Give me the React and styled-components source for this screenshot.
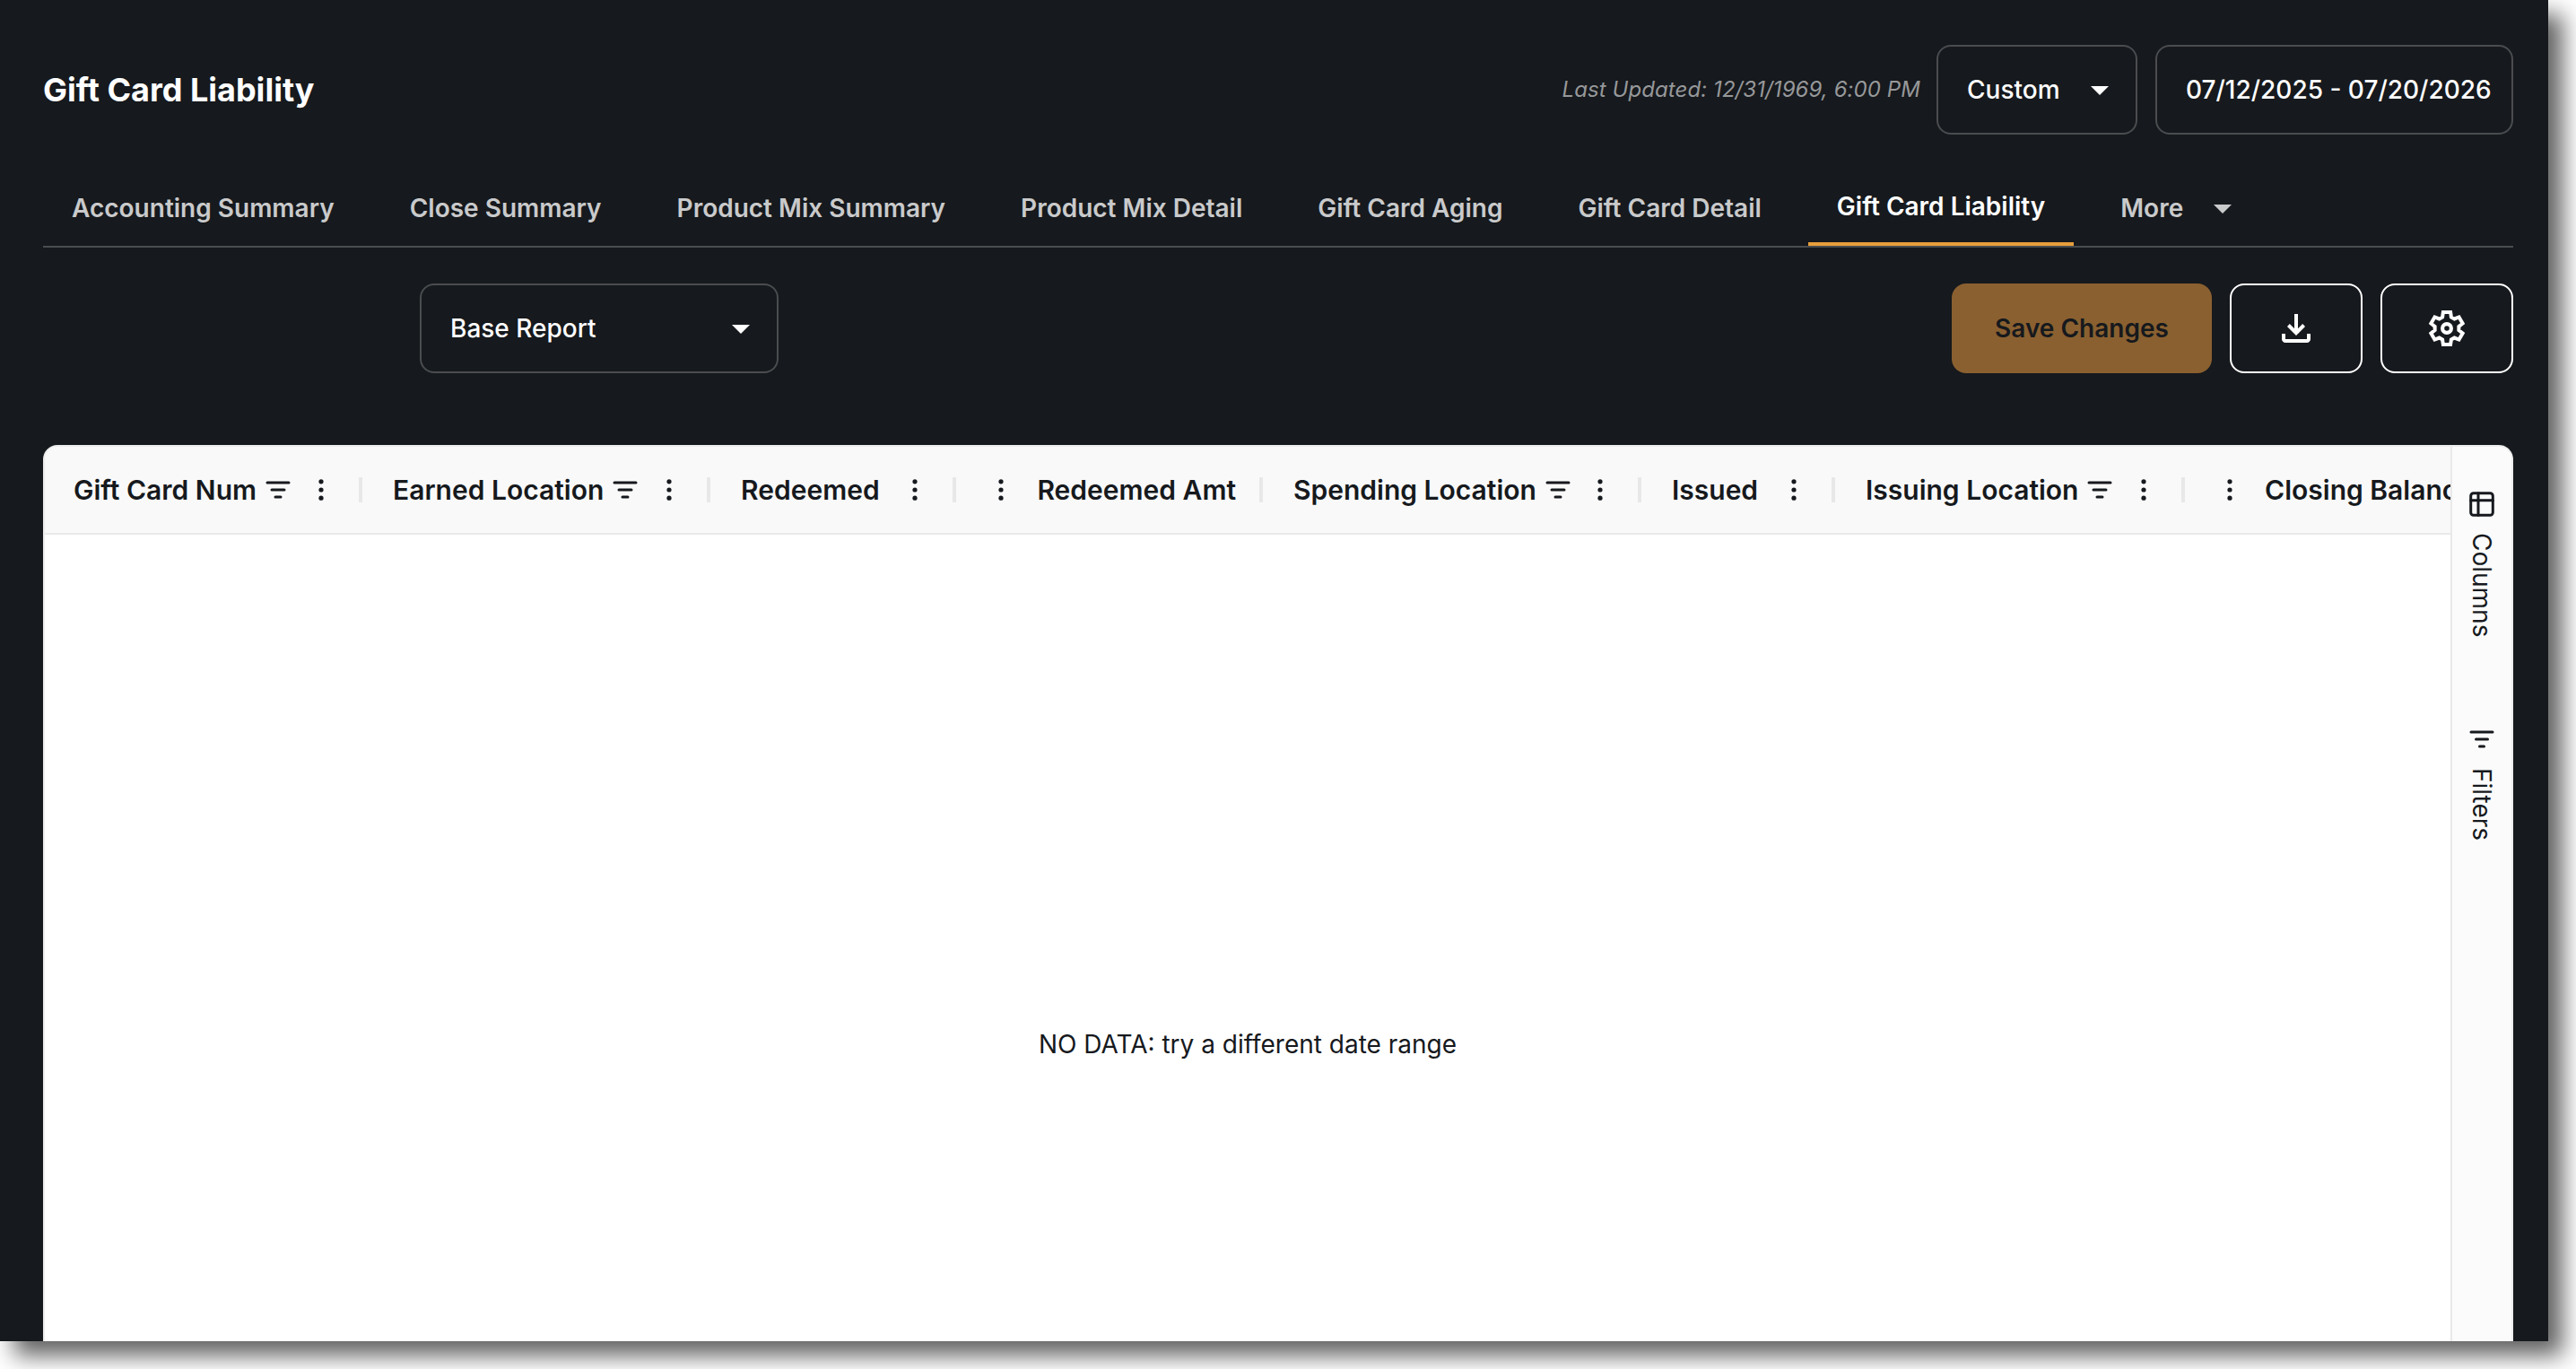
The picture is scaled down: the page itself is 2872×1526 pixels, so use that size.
import React, { Component } from "react";
import styled, { createGlobalStyle, css } from "styled-components";

const tabs = [
  "Accounting Summary",
  "Close Summary",
  "Product Mix Summary",
  "Product Mix Detail",
  "Gift Card Aging",
  "Gift Card Detail",
  "Gift Card Liability"
];

const columns = [
  { name: "Gift Card Num", width: 354, filter: true },
  { name: "Earned Location", width: 388, filter: true },
  { name: "Redeemed", width: 274 },
  { name: "Redeemed Amt", width: 342, numeric: true },
  { name: "Spending Location", width: 422, filter: true },
  { name: "Issued", width: 216 },
  { name: "Issuing Location", width: 390, filter: true },
  { name: "Closing Balance", width: 352, numeric: true }
];

const GlobalStyle = createGlobalStyle`
  html,
  body {
    margin: 0;
    background: #fff;
    overflow: hidden;
  }
  * {
    box-sizing: border-box;
  }
`;

const Window = styled.div`
  display: flex;
  flex-direction: column;
  width: 2841px;
  height: 1495px;
  margin: 0 31px 31px 0;
  padding: 50px 39px 0 48px;
  background: #16191d;
  color: #fff;
  font-family: Inter, "Liberation Sans", sans-serif;
  font-size: 28px;
  line-height: 40px;
  white-space: nowrap;
  box-shadow: 16px 16px 24px rgba(0, 0, 0, 0.62);
`;

const Header = styled.header`
  display: flex;
  align-items: center;
  height: 100px;
`;
const Title = styled.h1`
  flex: 1;
  margin: 0;
  font-size: 36px;
  font-weight: 700;
`;
const Updated = styled.div`
  margin-right: 18px;
  color: #96989a;
  font-size: 24px;
  font-style: italic;
  letter-spacing: 0.08px;
`;
const Select = styled.div`
  display: flex;
  align-items: center;
  justify-content: space-between;
  width: ${props => props.$width}px;
  height: 100px;
  padding: 0 30px 0 32px;
  border: 2px solid #4a4c4f;
  border-radius: 16px;
  font-weight: 500;
`;
const DateRange = styled(Select)`
  margin-left: 20px;
`;
const Caret = styled.span`
  border: 10px solid transparent;
  border-top-color: currentColor;
  border-bottom: 0;
  margin-top: 2px;
`;

const Tabs = styled.nav`
  display: flex;
  gap: 20px;
  height: 86px;
  margin-top: 40px;
  border-bottom: 2px solid #4a4c4f;
`;
const Tab = styled.div`
  display: flex;
  align-items: center;
  height: 84px;
  padding: 0 32px;
  color: #c9cacb;
  font-weight: 600;
  ${props =>
    props.$active &&
    css`
      color: #fff;
      border-bottom: 4px solid #e79f3b;
    `}
  ${Caret} {
    margin-left: 34px;
  }
`;

const Toolbar = styled.div`
  display: flex;
  gap: 20px;
  height: 100px;
  margin: 40px 0 80px;
  padding-left: 420px;
`;
const Spacer = styled.div`
  flex: 1;
`;
const Button = styled.button`
  display: flex;
  align-items: center;
  justify-content: center;
  width: 148px;
  padding: 0;
  border: 2px solid #fff;
  border-radius: 16px;
  background: transparent;
  color: #fff;
  font: inherit;
`;
const SaveButton = styled(Button)`
  width: 290px;
  border: 0;
  background: #8a6030;
  color: #16191d;
  font-weight: 600;
`;

const Grid = styled.div`
  display: flex;
  flex: 1;
  min-height: 0;
  border: 2px solid #ededed;
  border-bottom: 0;
  border-radius: 16px 16px 0 0;
  background: #fff;
  color: #16191d;
  overflow: hidden;
`;
const GridMain = styled.div`
  display: flex;
  flex-direction: column;
  width: 2682px;
  overflow: hidden;
`;
const GridHeader = styled.div`
  display: flex;
  flex: none;
  height: 98px;
  background: #f9f9f9;
  border-bottom: 2px solid #e9e9e9;
`;
const HeaderCell = styled.div`
  display: flex;
  flex: none;
  align-items: center;
  justify-content: space-between;
  width: ${props => props.$width}px;
  padding: ${props => (props.$numeric ? "0 26px 0 47px" : "0 39px 0 34px")};
  border-right: 4px solid;
  border-image: linear-gradient(
      transparent 34px,
      #e8e8e8 34px,
      #e8e8e8 62px,
      transparent 62px
    )
    1;
  border-image-width: 0 4px 0 0;
  font-size: 30px;
  font-weight: 600;
  &:first-child {
    padding-left: 32px;
  }
`;
const Label = styled.div`
  display: flex;
  align-items: center;
  gap: 10px;
`;
const Empty = styled.div`
  padding-top: 548px;
  text-align: center;
`;

const SideBar = styled.aside`
  flex: 1;
  background: #fbfbfb;
  border-left: 2px solid #e9e9e9;
`;
const SideTab = styled.div`
  display: flex;
  flex-direction: column;
  align-items: center;
  gap: ${props => props.$gap}px;
  height: 262px;
  padding-top: ${props => props.$top}px;
`;
const SideLabel = styled.span`
  writing-mode: vertical-rl;
`;

const Stroke = styled.svg`
  display: block;
  fill: none;
  stroke: currentColor;
  stroke-width: 3px;
  stroke-linecap: round;
  stroke-linejoin: round;
`;

const FilterIcon = () => (
  <Stroke width="28" height="20" viewBox="0 0 28 20">
    <path d="M2 2h24M7 10h14M11 18h6" />
  </Stroke>
);

const DotsIcon = () => (
  <svg width="6" height="24" viewBox="0 0 6 24" fill="currentColor">
    <circle cx="3" cy="2.8" r="2.6" />
    <circle cx="3" cy="12" r="2.6" />
    <circle cx="3" cy="21.2" r="2.6" />
  </svg>
);

const ColumnsIcon = () => (
  <Stroke width="28" height="28" viewBox="0 0 28 28">
    <rect x="1.7" y="1.7" width="24.6" height="24.6" rx="3" />
    <path d="M1.7 9.7h24.6M10 1.7v24.6" />
  </Stroke>
);

const SideFilterIcon = () => (
  <Stroke width="28" height="26" viewBox="0 0 28 26">
    <path d="M2 2h24M7.5 10h13M11.5 18h5" />
  </Stroke>
);

const DownloadIcon = () => (
  <svg width="48" height="48" viewBox="0 0 24 24" fill="currentColor">
    <path d="m12 16-5-5 1.4-1.45 2.6 2.6V4h2v8.15l2.6-2.6L17 11l-5 5Zm-6 4q-.825 0-1.412-.587T4 18v-3h2v3h12v-3h2v3q0 .825-.587 1.413T18 20H6Z" />
  </svg>
);

// one tooth, repeated every 60 degrees around the hub
const tooth = [[-2.45, -6.3], [-2.05, -9], [2.05, -9], [2.45, -6.3]];
const gear = [0, 1, 2, 3, 4, 5]
  .map(i => {
    const a = (i * Math.PI) / 3;
    return tooth
      .map(([x, y]) =>
        [
          x * Math.cos(a) - y * Math.sin(a),
          x * Math.sin(a) + y * Math.cos(a)
        ].join(",")
      )
      .join(" ");
  })
  .join(" ");

const GearIcon = () => (
  <svg
    width="48"
    height="48"
    viewBox="-12 -12 24 24"
    fill="none"
    stroke="currentColor"
    strokeWidth="2"
  >
    <polygon points={gear} />
    <circle r="2.45" strokeWidth="2.1" />
  </svg>
);

export default class App extends Component {
  render() {
    return (
      <>
        <GlobalStyle />
        <Window>
          <Header>
            <Title>Gift Card Liability</Title>
            <Updated>Last Updated: 12/31/1969, 6:00 PM</Updated>
            <Select $width={224}>
              Custom
              <Caret />
            </Select>
            <DateRange $width={399}>07/12/2025 - 07/20/2026</DateRange>
          </Header>
          <Tabs>
            {tabs.map(tab => (
              <Tab key={tab} $active={tab === "Gift Card Liability"}>
                {tab}
              </Tab>
            ))}
            <Tab>
              More
              <Caret />
            </Tab>
          </Tabs>
          <Toolbar>
            <Select $width={400}>
              Base Report
              <Caret />
            </Select>
            <Spacer />
            <SaveButton>Save Changes</SaveButton>
            <Button>
              <DownloadIcon />
            </Button>
            <Button>
              <GearIcon />
            </Button>
          </Toolbar>
          <Grid>
            <GridMain>
              <GridHeader>
                {columns.map(({ name, width, filter, numeric }) => (
                  <HeaderCell key={name} $width={width} $numeric={numeric}>
                    {numeric && <DotsIcon />}
                    <Label>
                      {name}
                      {filter && <FilterIcon />}
                    </Label>
                    {!numeric && <DotsIcon />}
                  </HeaderCell>
                ))}
              </GridHeader>
              <Empty>NO DATA: try a different date range</Empty>
            </GridMain>
            <SideBar>
              <SideTab $top={50} $gap={18}>
                <ColumnsIcon />
                <SideLabel>Columns</SideLabel>
              </SideTab>
              <SideTab $top={54} $gap={16}>
                <SideFilterIcon />
                <SideLabel>Filters</SideLabel>
              </SideTab>
            </SideBar>
          </Grid>
        </Window>
      </>
    );
  }
}
